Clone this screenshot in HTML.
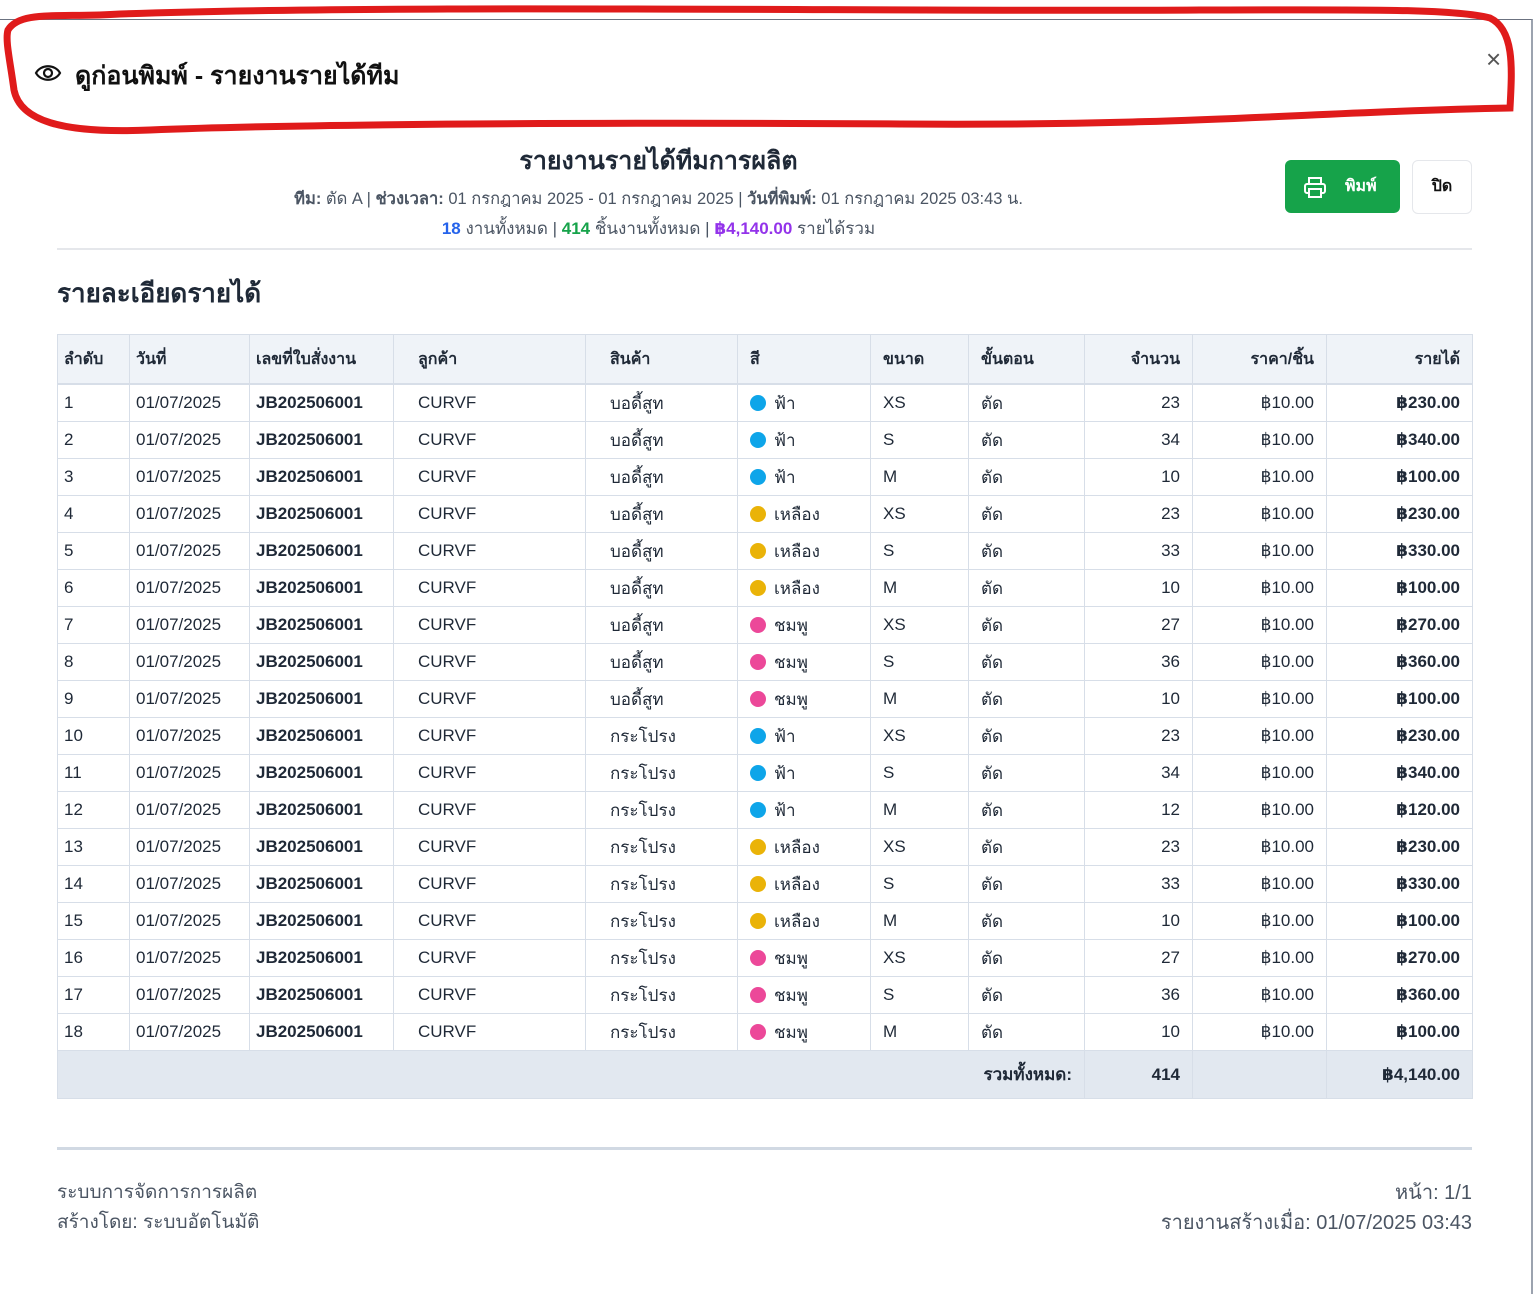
<!DOCTYPE html><html><head><meta charset="utf-8"><style>
body{margin:0;width:1535px;height:1293px;background:#fff;font-family:"Liberation Sans","DejaVu Sans",sans-serif;color:#1f2937;position:relative;overflow:hidden}
.abs{position:absolute}
table{position:absolute;left:57px;top:334px;width:1415px;border-collapse:collapse;font-size:17px;table-layout:fixed}
td,th{border:1px solid #d7dee8;padding:0 6px;height:36px;text-align:left;white-space:nowrap}
th{background:#eff3f8;height:48px;font-weight:bold;font-size:16px;border-bottom:2px solid #d7dee8}
.r{text-align:right;padding-right:12px}
.b{font-weight:bold}
.d{display:inline-block;width:16px;height:16px;border-radius:50%;vertical-align:-2px;margin-right:8px}
tfoot td{background:#e2e8f0;height:47px;font-weight:bold}
</style></head><body>
<div class="abs" style="left:0;top:19px;width:1531px;height:1274px;border-top:1px solid #6b7280;border-right:2px solid #9ca3af"></div>
<svg class="abs" style="left:0;top:0" width="1535" height="140"><path d="M8,30 C20,10 60,18 120,14 C400,4 900,12 1200,10 C1350,10 1450,8 1490,18 C1515,30 1512,70 1510,108 C1300,112 1200,126 900,124 C600,122 300,124 150,130 C60,134 20,120 14,90 C10,60 5,40 8,30Z" fill="none" stroke="#e01b1b" stroke-width="7"/></svg>
<svg class="abs" style="left:34px;top:62px" width="28" height="22" viewBox="0 0 28 22"><path d="M2,11 C7,2 21,2 26,11 C21,20 7,20 2,11Z" fill="none" stroke="#111" stroke-width="2.2"/><circle cx="14" cy="11" r="4" fill="none" stroke="#111" stroke-width="2.2"/></svg>
<div class="abs" style="left:75px;top:56px;font-size:25px;font-weight:bold;color:#111">ดูก่อนพิมพ์ - รายงานรายได้ทีม</div>
<div class="abs" style="left:1486px;top:44px;font-size:26px;color:#555">×</div>
<div class="abs" style="left:0;width:1317px;top:141px;text-align:center;font-size:25px;font-weight:bold;color:#1f2937">รายงานรายได้ทีมการผลิต</div>
<div class="abs" style="left:0;width:1317px;top:186px;text-align:center;font-size:16.5px;color:#4b5563"><b>ทีม:</b> ตัด A | <b>ช่วงเวลา:</b> 01 กรกฎาคม 2025 - 01 กรกฎาคม 2025 | <b>วันที่พิมพ์:</b> 01 กรกฎาคม 2025 03:43 น.</div>
<div class="abs" style="left:0;width:1317px;top:215px;text-align:center;font-size:17px;color:#4b5563"><b style="color:#2563eb">18</b> งานทั้งหมด | <b style="color:#16a34a">414</b> ชิ้นงานทั้งหมด | <b style="color:#9333ea">฿4,140.00</b> รายได้รวม</div>
<div class="abs" style="left:1285px;top:160px;width:115px;height:53px;background:#16a34a;border-radius:6px;color:#fff;font-weight:bold;font-size:16px;line-height:53px"><svg style="position:absolute;left:18px;top:15px" width="24" height="24" viewBox="0 0 24 24" fill="none" stroke="#fff" stroke-width="2"><path d="M6 9V3h12v6M6 18H4a2 2 0 0 1-2-2v-5a2 2 0 0 1 2-2h16a2 2 0 0 1 2 2v5a2 2 0 0 1-2 2h-2M6 14h12v8H6z"/></svg><span style="position:absolute;left:60px">พิมพ์</span></div>
<div class="abs" style="left:1412px;top:160px;width:58px;height:52px;border:1px solid #e5e7eb;border-radius:6px;text-align:center;line-height:52px;font-weight:bold;font-size:16px;color:#111">ปิด</div>
<div class="abs" style="left:57px;top:248px;width:1415px;height:2px;background:#e5e7eb"></div>
<div class="abs" style="left:57px;top:273px;font-size:26px;font-weight:bold;color:#1f2937">รายละเอียดรายได้</div>
<table><colgroup><col style="width:72px"><col style="width:120px"><col style="width:144px"><col style="width:192px"><col style="width:152px"><col style="width:133px"><col style="width:98px"><col style="width:116px"><col style="width:108px"><col style="width:134px"><col style="width:146px"></colgroup>
<thead><tr><th>ลำดับ</th><th>วันที่</th><th>เลขที่ใบสั่งงาน</th><th style="padding-left:24px">ลูกค้า</th><th style="padding-left:24px">สินค้า</th><th style="padding-left:12px">สี</th><th style="padding-left:12px">ขนาด</th><th style="padding-left:12px">ขั้นตอน</th><th class="r">จำนวน</th><th class="r">ราคา/ชิ้น</th><th class="r">รายได้</th></tr></thead>
<tbody id="tb"></tbody>
<tfoot><tr><td colspan="8" class="r">รวมทั้งหมด:</td><td class="r">414</td><td></td><td class="r">฿4,140.00</td></tr></tfoot></table>
<div class="abs" style="left:57px;top:1147px;width:1415px;height:3px;background:#d1d9e3"></div>
<div class="abs" style="left:57px;top:1178px;font-size:19px;color:#4b5563;line-height:30px">ระบบการจัดการการผลิต<br>สร้างโดย: ระบบอัตโนมัติ</div>
<div class="abs" style="right:63px;top:1178px;font-size:20px;color:#4b5563;line-height:30px;text-align:right">หน้า: 1/1<br>รายงานสร้างเมื่อ: 01/07/2025 03:43</div>
<script>
var c={"ฟ้า":"#0ea5e9","เหลือง":"#eab308","ชมพู":"#ec4899"},q=[23,34,10,23,33,10,27,36,10,23,34,12,23,33,10,27,36,10],col=["ฟ้า","เหลือง","ชมพู"],sz=["XS","S","M"],h="";
for(var i=0;i<18;i++){var k=col[Math.floor(i/3)%3];h+='<tr><td>'+(i+1)+'</td><td>01/07/2025</td><td class="b">JB202506001</td><td style="padding-left:24px">CURVF</td><td style="padding-left:24px">'+(i<9?"บอดี้สูท":"กระโปรง")+'</td><td style="padding-left:12px"><span class="d" style="background:'+c[k]+'"></span>'+k+'</td><td style="padding-left:12px">'+sz[i%3]+'</td><td style="padding-left:12px">ตัด</td><td class="r">'+q[i]+'</td><td class="r">฿10.00</td><td class="r b">฿'+q[i]*10+'.00</td></tr>';}
document.getElementById("tb").innerHTML=h;
</script>
</body></html>
